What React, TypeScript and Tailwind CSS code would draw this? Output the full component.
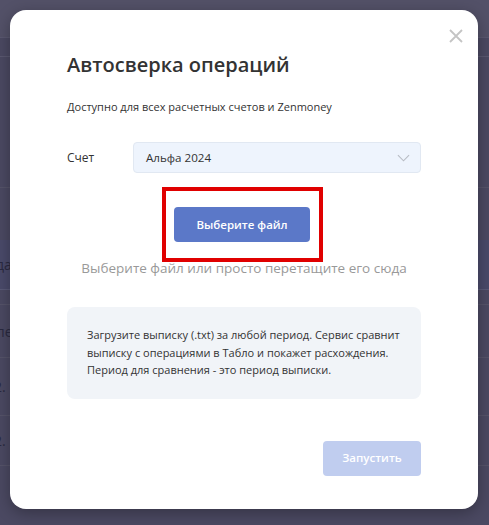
import React from "react";

export default function App() {
  const font = { fontFamily: '"Open Sans", "Noto Sans", sans-serif' };
  return (
    <div className="relative w-[489px] h-[525px] overflow-hidden bg-[#4b4962]" style={font}>
      {/* background page content behind overlay */}
      <div className="flex flex-col text-[14px] text-[#2a2940]">
        <div className="h-[38px] bg-[#535168] border-b border-[#5a5870]" />
        <div className="h-[19px] border-b border-[#5a5870]" />
        <div className="h-[131px] border-b border-[#555369]" />
        <div className="h-[52px]" />
        <div className="h-[50px] bg-[#4a4a6a] border-b border-[#5a5a78] flex items-center pl-0">
          <span className="-ml-[4px]">да.</span>
        </div>
        <div className="h-[15px] border-b border-[#555369]" />
        <div className="h-[53px] border-b border-[#555369] flex items-center">
          <span className="-ml-[4px]">пе</span>
        </div>
        <div className="h-[58px] border-b border-[#555369] flex items-center">
          <span className="-ml-[6px]">2.</span>
        </div>
        <div className="h-[50px] border-b border-[#555369] flex items-center">
          <span className="-ml-[6px]">2.</span>
        </div>
      </div>

      {/* modal */}
      <div className="absolute left-[10px] top-[10px] w-[468px] h-[499px] bg-white rounded-[16px] shadow-[0_4px_16px_rgba(0,0,0,0.3)] px-[57px] pt-[41px] text-[#333]">
        <button className="absolute right-[14px] top-[18px] w-[16px] h-[16px] text-[#c4c4c4]">
          <svg viewBox="0 0 16 16" width="16" height="16" fill="none" stroke="currentColor" strokeWidth="1.8">
            <path d="M2 2 L14 14 M14 2 L2 14" />
          </svg>
        </button>
        <h1 className="text-[20px] leading-[28px] font-semibold text-[#333]">Автосверка операций</h1>
        <p className="mt-[20px] text-[11px] leading-[16px] text-[#333]">
          Доступно для всех расчетных счетов и Zenmoney
        </p>
        <div className="mt-[27px] flex items-center">
          <span className="w-[66px] text-[12px] text-[#333]">Счет</span>
          <div className="flex-1 h-[31px] rounded-[4px] bg-[#eef4fd] border border-[#e1e8f2] flex items-center justify-between pl-[12px] pr-[10px]">
            <span className="text-[11.6px] text-[#333]">Альфа 2024</span>
            <svg viewBox="0 0 14 8" width="13" height="8" fill="none" stroke="#b8bcc4" strokeWidth="1.2">
              <path d="M1 1 L7 7 L13 1" />
            </svg>
          </div>
        </div>
        <div className="mt-[14px] flex flex-col items-center">
          <div className="w-[161px] h-[75px] border-[4px] border-[#e00000] flex items-center justify-center -translate-x-[2px]">
            <button className="w-[136px] h-[35px] rounded-[4px] bg-[#5b78c8] text-white text-[11.5px] font-semibold">
              Выберите файл
            </button>
          </div>
          <p className="-mt-[3px] text-[13.5px] leading-[18px] text-[#999]">
            Выберите файл или просто перетащите его сюда
          </p>
        </div>
        <div className="mt-[30px] rounded-[8px] bg-[#f1f4f8] px-[20px] pt-[19px] pb-[20px] text-[11px] leading-[17.5px] text-[#333] whitespace-nowrap">
          Загрузите выписку (.txt) за любой период. Сервис сравнит
          <br />
          выписку с операциями в Табло и покажет расхождения.
          <br />
          Период для сравнения - это период выписки.
        </div>
        <div className="mt-[42px] flex justify-end">
          <button className="w-[98px] h-[35px] rounded-[4px] bg-[#c0cdef] text-white text-[11.5px] font-semibold">
            Запустить
          </button>
        </div>
      </div>
    </div>
  );
}
